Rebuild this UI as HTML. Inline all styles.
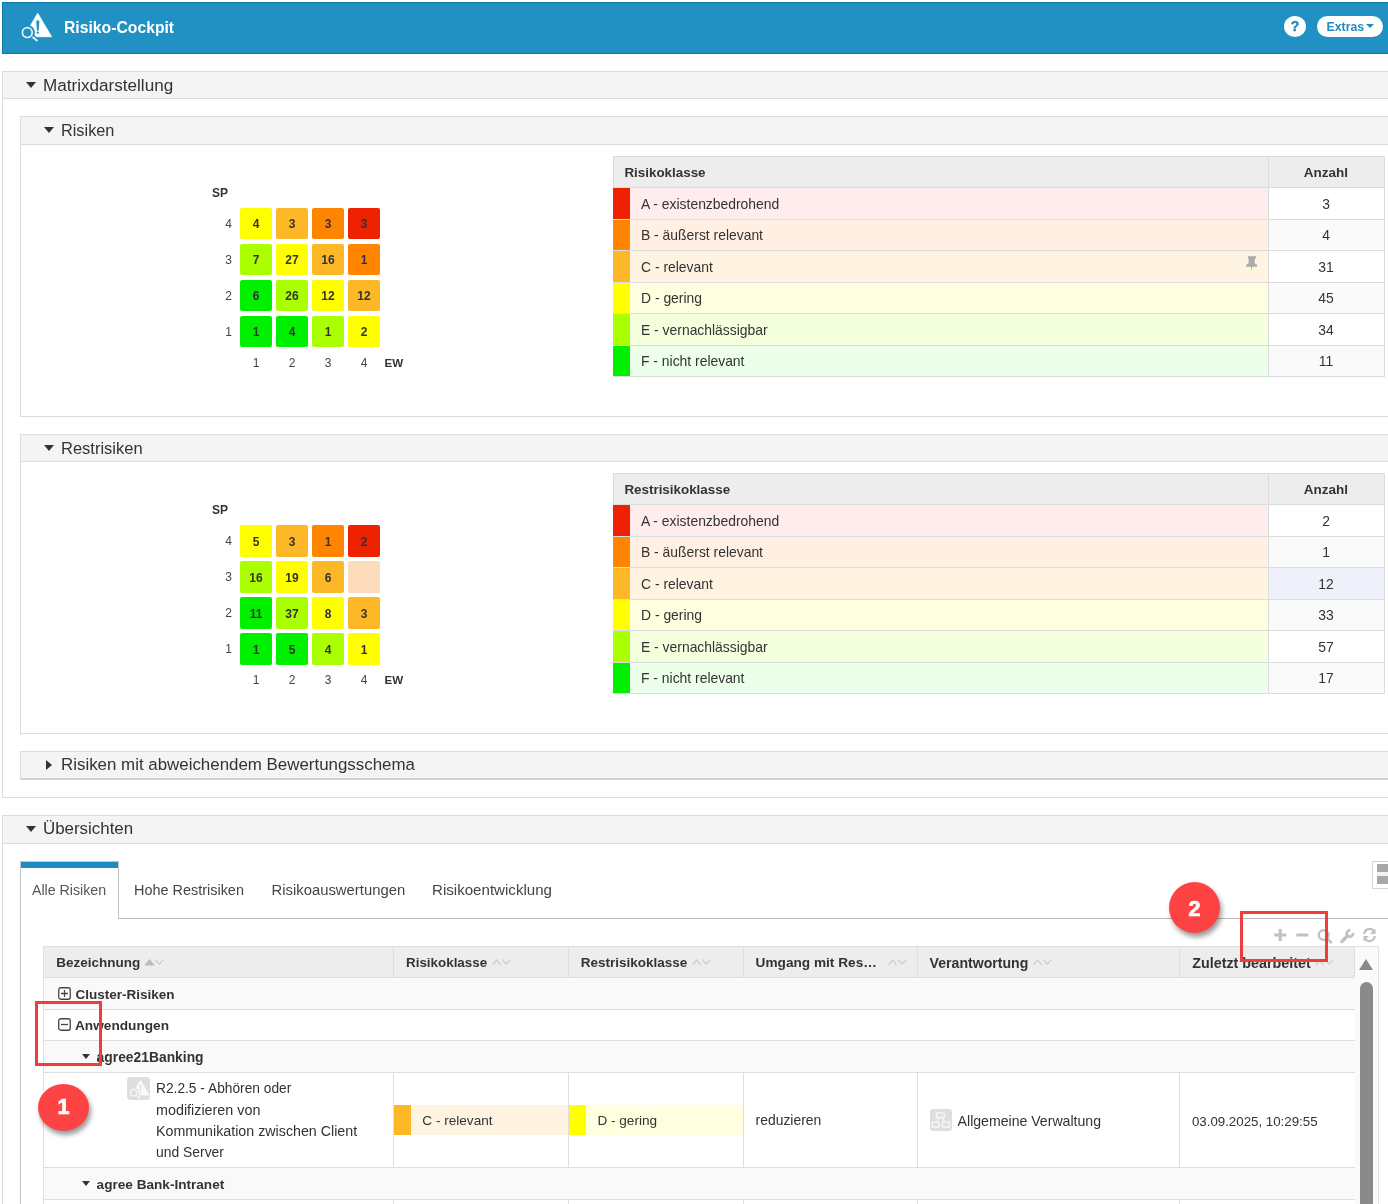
<!DOCTYPE html>
<html><head><meta charset="utf-8">
<style>
*{box-sizing:border-box;margin:0;padding:0}
html,body{width:1388px;height:1204px;overflow:hidden;background:#fff;font-family:"Liberation Sans",sans-serif;color:#333;position:relative}
.a{position:absolute}
.t{position:absolute;white-space:nowrap;line-height:1}
</style></head><body><div style="position:absolute;left:0;top:0;width:1388px;height:1204px;overflow:hidden;will-change:transform">
<div class="a" style="left:2px;top:2px;width:1400px;height:52px;background:#2191c3;border:1px solid #0d78ad"></div>
<svg class="a" style="left:16px;top:8px" width="44" height="38" viewBox="16 8 44 38">
<path d="M37.7,13.2 L51.6,36.7 L24,36.7 Z" fill="#fff" stroke="#fff" stroke-width="0.8" stroke-linejoin="round"/>
<path d="M36.2,21.2 Q37.8,19.5 39.4,21.2 L38.6,30.8 L37,30.8 Z" fill="#2191c3"/>
<circle cx="37.8" cy="32.6" r="1.2" fill="#2191c3"/>
<circle cx="27.3" cy="32.6" r="7.6" fill="#2191c3"/>
<path d="M31.5,36.5 L36.5,41.5 L38.5,39.5 L34,34.5 Z" fill="#2191c3"/>
<circle cx="27.3" cy="32.6" r="4.9" fill="none" stroke="#e6f2f8" stroke-width="1.7"/>
<line x1="33.2" y1="37.4" x2="36.9" y2="40.5" stroke="#e6f2f8" stroke-width="2" stroke-linecap="round"/>
</svg>
<div class="t" style="left:63.50px;top:18.91px;font-size:17px;font-weight:bold;color:#fff;transform:scaleX(0.925);transform-origin:0 0">Risiko-Cockpit</div>
<div class="a" style="left:1284px;top:16px;width:22px;height:21px;background:#fff;border-radius:50%"></div>
<div class="t" style="left:995.00px;width:600px;text-align:center;top:19.15px;font-size:14px;font-weight:bold;color:#1f8bc0;-webkit-text-stroke:0.4px #1f8bc0">?</div>
<div class="a" style="left:1317px;top:16px;width:66px;height:21px;background:#fff;border-radius:11px"></div>
<div class="t" style="left:1326.50px;top:21.09px;font-size:12.3px;font-weight:bold;color:#1f8bc0;">Extras</div>
<div class="a" style="left:1366px;top:24px;width:0;height:0;border-left:4px solid transparent;border-right:4px solid transparent;border-top:4.5px solid #1f8bc0"></div>
<div class="a" style="left:2px;top:71px;width:1400px;height:727px;background:#fff;border:1px solid #dcdcdc"></div>
<div class="a" style="left:2px;top:71px;width:1400px;height:28px;background:#f4f4f4;border:1px solid #dcdcdc"></div>
<div class="a" style="left:26px;top:82px;width:0;height:0;border-left:5px solid transparent;border-right:5px solid transparent;border-top:6px solid #333"></div>
<div class="t" style="left:43.00px;top:76.52px;font-size:17.1px;color:#333;">Matrixdarstellung</div>
<div class="a" style="left:20px;top:116px;width:1400px;height:301px;background:#fff;border:1px solid #dcdcdc"></div>
<div class="a" style="left:20px;top:116px;width:1400px;height:29px;background:#f4f4f4;border:1px solid #dcdcdc"></div>
<div class="a" style="left:44px;top:127px;width:0;height:0;border-left:5px solid transparent;border-right:5px solid transparent;border-top:6px solid #333"></div>
<div class="t" style="left:61.00px;top:122.00px;font-size:16.3px;color:#333;">Risiken</div>
<div class="a" style="left:20px;top:434px;width:1400px;height:300px;background:#fff;border:1px solid #dcdcdc"></div>
<div class="a" style="left:20px;top:434px;width:1400px;height:28px;background:#f4f4f4;border:1px solid #dcdcdc"></div>
<div class="a" style="left:44px;top:445px;width:0;height:0;border-left:5px solid transparent;border-right:5px solid transparent;border-top:6px solid #333"></div>
<div class="t" style="left:61.00px;top:440.03px;font-size:16.5px;color:#333;">Restrisiken</div>
<div class="a" style="left:20px;top:751px;width:1400px;height:29px;background:#f4f4f4;border:1px solid #dcdcdc;border-bottom:2px solid #d2d2d2"></div>
<div class="a" style="left:46px;top:759.5px;width:0;height:0;border-top:5.5px solid transparent;border-bottom:5.5px solid transparent;border-left:6.5px solid #333"></div>
<div class="t" style="left:61.00px;top:756.99px;font-size:16.9px;color:#333;">Risiken mit abweichendem Bewertungsschema</div>
<div class="a" style="left:2px;top:815px;width:1400px;height:600px;background:#fff;border:1px solid #dcdcdc"></div>
<div class="a" style="left:2px;top:815px;width:1400px;height:29px;background:#f4f4f4;border:1px solid #dcdcdc"></div>
<div class="a" style="left:26px;top:826px;width:0;height:0;border-left:5px solid transparent;border-right:5px solid transparent;border-top:6px solid #333"></div>
<div class="t" style="left:43.00px;top:821.49px;font-size:16.9px;color:#333;">Übersichten</div>
<div class="t" style="left:212.00px;top:186.74px;font-size:12px;font-weight:bold;color:#333;">SP</div>
<div class="t" style="left:-71.30px;width:600px;text-align:center;top:217.84px;font-size:12px;color:#444;">4</div>
<div class="a" style="left:240px;top:208px;width:32px;height:31px;background:#ffff00;border-radius:2px"></div>
<div class="t" style="left:-44.00px;width:600px;text-align:center;top:217.84px;font-size:12px;font-weight:bold;color:#333;">4</div>
<div class="a" style="left:276px;top:208px;width:32px;height:31px;background:#fdb827;border-radius:2px"></div>
<div class="t" style="left:-8.00px;width:600px;text-align:center;top:217.84px;font-size:12px;font-weight:bold;color:#333;">3</div>
<div class="a" style="left:312px;top:208px;width:32px;height:31px;background:#ff8500;border-radius:2px"></div>
<div class="t" style="left:28.00px;width:600px;text-align:center;top:217.84px;font-size:12px;font-weight:bold;color:#333;">3</div>
<div class="a" style="left:348px;top:208px;width:32px;height:31px;background:#ee2200;border-radius:2px"></div>
<div class="t" style="left:64.00px;width:600px;text-align:center;top:217.84px;font-size:12px;font-weight:bold;color:#333;">3</div>
<div class="t" style="left:-71.30px;width:600px;text-align:center;top:253.84px;font-size:12px;color:#444;">3</div>
<div class="a" style="left:240px;top:244px;width:32px;height:31px;background:#aaff00;border-radius:2px"></div>
<div class="t" style="left:-44.00px;width:600px;text-align:center;top:253.84px;font-size:12px;font-weight:bold;color:#333;">7</div>
<div class="a" style="left:276px;top:244px;width:32px;height:31px;background:#ffff00;border-radius:2px"></div>
<div class="t" style="left:-8.00px;width:600px;text-align:center;top:253.84px;font-size:12px;font-weight:bold;color:#333;">27</div>
<div class="a" style="left:312px;top:244px;width:32px;height:31px;background:#fdb827;border-radius:2px"></div>
<div class="t" style="left:28.00px;width:600px;text-align:center;top:253.84px;font-size:12px;font-weight:bold;color:#333;">16</div>
<div class="a" style="left:348px;top:244px;width:32px;height:31px;background:#ff8500;border-radius:2px"></div>
<div class="t" style="left:64.00px;width:600px;text-align:center;top:253.84px;font-size:12px;font-weight:bold;color:#333;">1</div>
<div class="t" style="left:-71.30px;width:600px;text-align:center;top:289.84px;font-size:12px;color:#444;">2</div>
<div class="a" style="left:240px;top:280px;width:32px;height:31px;background:#00f000;border-radius:2px"></div>
<div class="t" style="left:-44.00px;width:600px;text-align:center;top:289.84px;font-size:12px;font-weight:bold;color:#333;">6</div>
<div class="a" style="left:276px;top:280px;width:32px;height:31px;background:#aaff00;border-radius:2px"></div>
<div class="t" style="left:-8.00px;width:600px;text-align:center;top:289.84px;font-size:12px;font-weight:bold;color:#333;">26</div>
<div class="a" style="left:312px;top:280px;width:32px;height:31px;background:#ffff00;border-radius:2px"></div>
<div class="t" style="left:28.00px;width:600px;text-align:center;top:289.84px;font-size:12px;font-weight:bold;color:#333;">12</div>
<div class="a" style="left:348px;top:280px;width:32px;height:31px;background:#fdb827;border-radius:2px"></div>
<div class="t" style="left:64.00px;width:600px;text-align:center;top:289.84px;font-size:12px;font-weight:bold;color:#333;">12</div>
<div class="t" style="left:-71.30px;width:600px;text-align:center;top:325.84px;font-size:12px;color:#444;">1</div>
<div class="a" style="left:240px;top:316px;width:32px;height:31px;background:#00f000;border-radius:2px"></div>
<div class="t" style="left:-44.00px;width:600px;text-align:center;top:325.84px;font-size:12px;font-weight:bold;color:#333;">1</div>
<div class="a" style="left:276px;top:316px;width:32px;height:31px;background:#00f000;border-radius:2px"></div>
<div class="t" style="left:-8.00px;width:600px;text-align:center;top:325.84px;font-size:12px;font-weight:bold;color:#333;">4</div>
<div class="a" style="left:312px;top:316px;width:32px;height:31px;background:#aaff00;border-radius:2px"></div>
<div class="t" style="left:28.00px;width:600px;text-align:center;top:325.84px;font-size:12px;font-weight:bold;color:#333;">1</div>
<div class="a" style="left:348px;top:316px;width:32px;height:31px;background:#ffff00;border-radius:2px"></div>
<div class="t" style="left:64.00px;width:600px;text-align:center;top:325.84px;font-size:12px;font-weight:bold;color:#333;">2</div>
<div class="t" style="left:-44.00px;width:600px;text-align:center;top:356.64px;font-size:12px;color:#444;">1</div>
<div class="t" style="left:-8.00px;width:600px;text-align:center;top:356.64px;font-size:12px;color:#444;">2</div>
<div class="t" style="left:28.00px;width:600px;text-align:center;top:356.64px;font-size:12px;color:#444;">3</div>
<div class="t" style="left:64.00px;width:600px;text-align:center;top:356.64px;font-size:12px;color:#444;">4</div>
<div class="t" style="left:384.50px;top:356.98px;font-size:11.6px;font-weight:bold;color:#333;">EW</div>
<div class="t" style="left:212.00px;top:503.74px;font-size:12px;font-weight:bold;color:#333;">SP</div>
<div class="t" style="left:-71.30px;width:600px;text-align:center;top:534.84px;font-size:12px;color:#444;">4</div>
<div class="a" style="left:240px;top:525px;width:32px;height:32px;background:#ffff00;border-radius:2px"></div>
<div class="t" style="left:-44.00px;width:600px;text-align:center;top:535.84px;font-size:12px;font-weight:bold;color:#333;">5</div>
<div class="a" style="left:276px;top:525px;width:32px;height:32px;background:#fdb827;border-radius:2px"></div>
<div class="t" style="left:-8.00px;width:600px;text-align:center;top:535.84px;font-size:12px;font-weight:bold;color:#333;">3</div>
<div class="a" style="left:312px;top:525px;width:32px;height:32px;background:#ff8500;border-radius:2px"></div>
<div class="t" style="left:28.00px;width:600px;text-align:center;top:535.84px;font-size:12px;font-weight:bold;color:#333;">1</div>
<div class="a" style="left:348px;top:525px;width:32px;height:32px;background:#ee2200;border-radius:2px"></div>
<div class="t" style="left:64.00px;width:600px;text-align:center;top:535.84px;font-size:12px;font-weight:bold;color:#333;">2</div>
<div class="t" style="left:-71.30px;width:600px;text-align:center;top:570.84px;font-size:12px;color:#444;">3</div>
<div class="a" style="left:240px;top:561px;width:32px;height:32px;background:#aaff00;border-radius:2px"></div>
<div class="t" style="left:-44.00px;width:600px;text-align:center;top:571.84px;font-size:12px;font-weight:bold;color:#333;">16</div>
<div class="a" style="left:276px;top:561px;width:32px;height:32px;background:#ffff00;border-radius:2px"></div>
<div class="t" style="left:-8.00px;width:600px;text-align:center;top:571.84px;font-size:12px;font-weight:bold;color:#333;">19</div>
<div class="a" style="left:312px;top:561px;width:32px;height:32px;background:#fdb827;border-radius:2px"></div>
<div class="t" style="left:28.00px;width:600px;text-align:center;top:571.84px;font-size:12px;font-weight:bold;color:#333;">6</div>
<div class="a" style="left:348px;top:561px;width:32px;height:32px;background:#fddcbc;border-radius:2px"></div>
<div class="t" style="left:-71.30px;width:600px;text-align:center;top:606.84px;font-size:12px;color:#444;">2</div>
<div class="a" style="left:240px;top:597px;width:32px;height:32px;background:#00f000;border-radius:2px"></div>
<div class="t" style="left:-44.00px;width:600px;text-align:center;top:607.84px;font-size:12px;font-weight:bold;color:#333;">11</div>
<div class="a" style="left:276px;top:597px;width:32px;height:32px;background:#aaff00;border-radius:2px"></div>
<div class="t" style="left:-8.00px;width:600px;text-align:center;top:607.84px;font-size:12px;font-weight:bold;color:#333;">37</div>
<div class="a" style="left:312px;top:597px;width:32px;height:32px;background:#ffff00;border-radius:2px"></div>
<div class="t" style="left:28.00px;width:600px;text-align:center;top:607.84px;font-size:12px;font-weight:bold;color:#333;">8</div>
<div class="a" style="left:348px;top:597px;width:32px;height:32px;background:#fdb827;border-radius:2px"></div>
<div class="t" style="left:64.00px;width:600px;text-align:center;top:607.84px;font-size:12px;font-weight:bold;color:#333;">3</div>
<div class="t" style="left:-71.30px;width:600px;text-align:center;top:642.84px;font-size:12px;color:#444;">1</div>
<div class="a" style="left:240px;top:633px;width:32px;height:32px;background:#00f000;border-radius:2px"></div>
<div class="t" style="left:-44.00px;width:600px;text-align:center;top:643.84px;font-size:12px;font-weight:bold;color:#333;">1</div>
<div class="a" style="left:276px;top:633px;width:32px;height:32px;background:#00f000;border-radius:2px"></div>
<div class="t" style="left:-8.00px;width:600px;text-align:center;top:643.84px;font-size:12px;font-weight:bold;color:#333;">5</div>
<div class="a" style="left:312px;top:633px;width:32px;height:32px;background:#aaff00;border-radius:2px"></div>
<div class="t" style="left:28.00px;width:600px;text-align:center;top:643.84px;font-size:12px;font-weight:bold;color:#333;">4</div>
<div class="a" style="left:348px;top:633px;width:32px;height:32px;background:#ffff00;border-radius:2px"></div>
<div class="t" style="left:64.00px;width:600px;text-align:center;top:643.84px;font-size:12px;font-weight:bold;color:#333;">1</div>
<div class="t" style="left:-44.00px;width:600px;text-align:center;top:673.64px;font-size:12px;color:#444;">1</div>
<div class="t" style="left:-8.00px;width:600px;text-align:center;top:673.64px;font-size:12px;color:#444;">2</div>
<div class="t" style="left:28.00px;width:600px;text-align:center;top:673.64px;font-size:12px;color:#444;">3</div>
<div class="t" style="left:64.00px;width:600px;text-align:center;top:673.64px;font-size:12px;color:#444;">4</div>
<div class="t" style="left:384.50px;top:673.98px;font-size:11.6px;font-weight:bold;color:#333;">EW</div>
<div class="a" style="left:613px;top:156px;width:772px;height:31px;background:#ededed"></div>
<div class="t" style="left:624.40px;top:165.65px;font-size:13.4px;font-weight:bold;color:#333;">Risikoklasse</div>
<div class="t" style="left:1026.00px;width:600px;text-align:center;top:165.57px;font-size:13.5px;font-weight:bold;color:#333;">Anzahl</div>
<div class="a" style="left:613px;top:187px;width:655px;height:32px;background:#ffeded"></div>
<div class="a" style="left:1269px;top:187px;width:116px;height:32px;background:#ffffff"></div>
<div class="a" style="left:613px;top:187px;width:17px;height:32px;background:#ee2200"></div>
<div class="t" style="left:641.00px;top:197.63px;font-size:13.9px;color:#333;">A - existenzbedrohend</div>
<div class="t" style="left:1026.00px;width:600px;text-align:center;top:197.63px;font-size:13.9px;color:#333;">3</div>
<div class="a" style="left:613px;top:219px;width:655px;height:31px;background:#fff0e3"></div>
<div class="a" style="left:1269px;top:219px;width:116px;height:31px;background:#fafafa"></div>
<div class="a" style="left:613px;top:219px;width:17px;height:31px;background:#ff8500"></div>
<div class="t" style="left:641.00px;top:229.13px;font-size:13.9px;color:#333;">B - äußerst relevant</div>
<div class="t" style="left:1026.00px;width:600px;text-align:center;top:229.13px;font-size:13.9px;color:#333;">4</div>
<div class="a" style="left:613px;top:250px;width:655px;height:32px;background:#fff4e2"></div>
<div class="a" style="left:1269px;top:250px;width:116px;height:32px;background:#ffffff"></div>
<div class="a" style="left:613px;top:250px;width:17px;height:32px;background:#fdb827"></div>
<div class="t" style="left:641.00px;top:260.63px;font-size:13.9px;color:#333;">C - relevant</div>
<div class="t" style="left:1026.00px;width:600px;text-align:center;top:260.63px;font-size:13.9px;color:#333;">31</div>
<div class="a" style="left:613px;top:282px;width:655px;height:31px;background:#ffffdf"></div>
<div class="a" style="left:1269px;top:282px;width:116px;height:31px;background:#fafafa"></div>
<div class="a" style="left:613px;top:282px;width:17px;height:31px;background:#ffff00"></div>
<div class="t" style="left:641.00px;top:292.13px;font-size:13.9px;color:#333;">D - gering</div>
<div class="t" style="left:1026.00px;width:600px;text-align:center;top:292.13px;font-size:13.9px;color:#333;">45</div>
<div class="a" style="left:613px;top:313px;width:655px;height:32px;background:#f4ffdd"></div>
<div class="a" style="left:1269px;top:313px;width:116px;height:32px;background:#ffffff"></div>
<div class="a" style="left:613px;top:313px;width:17px;height:32px;background:#aaff00"></div>
<div class="t" style="left:641.00px;top:323.63px;font-size:13.9px;color:#333;">E - vernachlässigbar</div>
<div class="t" style="left:1026.00px;width:600px;text-align:center;top:323.63px;font-size:13.9px;color:#333;">34</div>
<div class="a" style="left:613px;top:345px;width:655px;height:31px;background:#ebffea"></div>
<div class="a" style="left:1269px;top:345px;width:116px;height:31px;background:#fafafa"></div>
<div class="a" style="left:613px;top:345px;width:17px;height:31px;background:#00f000"></div>
<div class="t" style="left:641.00px;top:355.13px;font-size:13.9px;color:#333;">F - nicht relevant</div>
<div class="t" style="left:1026.00px;width:600px;text-align:center;top:355.13px;font-size:13.9px;color:#333;">11</div>
<div class="a" style="left:613px;top:156px;width:772px;height:1px;background:#dcdcdc"></div>
<div class="a" style="left:613px;top:187px;width:772px;height:1px;background:#dcdcdc"></div>
<div class="a" style="left:613px;top:219px;width:772px;height:1px;background:#dcdcdc"></div>
<div class="a" style="left:613px;top:250px;width:772px;height:1px;background:#dcdcdc"></div>
<div class="a" style="left:613px;top:282px;width:772px;height:1px;background:#dcdcdc"></div>
<div class="a" style="left:613px;top:313px;width:772px;height:1px;background:#dcdcdc"></div>
<div class="a" style="left:613px;top:345px;width:772px;height:1px;background:#dcdcdc"></div>
<div class="a" style="left:613px;top:376px;width:772px;height:1px;background:#dcdcdc"></div>
<div class="a" style="left:1268px;top:156px;width:1px;height:220px;background:#dcdcdc"></div>
<div class="a" style="left:1384px;top:156px;width:1px;height:221px;background:#dcdcdc"></div>
<div class="a" style="left:613px;top:156px;width:1px;height:32px;background:#dcdcdc"></div>
<div class="a" style="left:613px;top:473px;width:772px;height:31px;background:#ededed"></div>
<div class="t" style="left:624.40px;top:482.65px;font-size:13.4px;font-weight:bold;color:#333;">Restrisikoklasse</div>
<div class="t" style="left:1026.00px;width:600px;text-align:center;top:482.57px;font-size:13.5px;font-weight:bold;color:#333;">Anzahl</div>
<div class="a" style="left:613px;top:504px;width:655px;height:32px;background:#ffeded"></div>
<div class="a" style="left:1269px;top:504px;width:116px;height:32px;background:#ffffff"></div>
<div class="a" style="left:613px;top:504px;width:17px;height:32px;background:#ee2200"></div>
<div class="t" style="left:641.00px;top:514.63px;font-size:13.9px;color:#333;">A - existenzbedrohend</div>
<div class="t" style="left:1026.00px;width:600px;text-align:center;top:514.63px;font-size:13.9px;color:#333;">2</div>
<div class="a" style="left:613px;top:536px;width:655px;height:31px;background:#fff0e3"></div>
<div class="a" style="left:1269px;top:536px;width:116px;height:31px;background:#fafafa"></div>
<div class="a" style="left:613px;top:536px;width:17px;height:31px;background:#ff8500"></div>
<div class="t" style="left:641.00px;top:546.13px;font-size:13.9px;color:#333;">B - äußerst relevant</div>
<div class="t" style="left:1026.00px;width:600px;text-align:center;top:546.13px;font-size:13.9px;color:#333;">1</div>
<div class="a" style="left:613px;top:567px;width:655px;height:32px;background:#fff4e2"></div>
<div class="a" style="left:1269px;top:567px;width:116px;height:32px;background:#eef0fa"></div>
<div class="a" style="left:613px;top:567px;width:17px;height:32px;background:#fdb827"></div>
<div class="t" style="left:641.00px;top:577.63px;font-size:13.9px;color:#333;">C - relevant</div>
<div class="t" style="left:1026.00px;width:600px;text-align:center;top:577.63px;font-size:13.9px;color:#333;">12</div>
<div class="a" style="left:613px;top:599px;width:655px;height:31px;background:#ffffdf"></div>
<div class="a" style="left:1269px;top:599px;width:116px;height:31px;background:#fafafa"></div>
<div class="a" style="left:613px;top:599px;width:17px;height:31px;background:#ffff00"></div>
<div class="t" style="left:641.00px;top:609.13px;font-size:13.9px;color:#333;">D - gering</div>
<div class="t" style="left:1026.00px;width:600px;text-align:center;top:609.13px;font-size:13.9px;color:#333;">33</div>
<div class="a" style="left:613px;top:630px;width:655px;height:32px;background:#f4ffdd"></div>
<div class="a" style="left:1269px;top:630px;width:116px;height:32px;background:#ffffff"></div>
<div class="a" style="left:613px;top:630px;width:17px;height:32px;background:#aaff00"></div>
<div class="t" style="left:641.00px;top:640.63px;font-size:13.9px;color:#333;">E - vernachlässigbar</div>
<div class="t" style="left:1026.00px;width:600px;text-align:center;top:640.63px;font-size:13.9px;color:#333;">57</div>
<div class="a" style="left:613px;top:662px;width:655px;height:31px;background:#ebffea"></div>
<div class="a" style="left:1269px;top:662px;width:116px;height:31px;background:#fafafa"></div>
<div class="a" style="left:613px;top:662px;width:17px;height:31px;background:#00f000"></div>
<div class="t" style="left:641.00px;top:672.13px;font-size:13.9px;color:#333;">F - nicht relevant</div>
<div class="t" style="left:1026.00px;width:600px;text-align:center;top:672.13px;font-size:13.9px;color:#333;">17</div>
<div class="a" style="left:613px;top:473px;width:772px;height:1px;background:#dcdcdc"></div>
<div class="a" style="left:613px;top:504px;width:772px;height:1px;background:#dcdcdc"></div>
<div class="a" style="left:613px;top:536px;width:772px;height:1px;background:#dcdcdc"></div>
<div class="a" style="left:613px;top:567px;width:772px;height:1px;background:#dcdcdc"></div>
<div class="a" style="left:613px;top:599px;width:772px;height:1px;background:#dcdcdc"></div>
<div class="a" style="left:613px;top:630px;width:772px;height:1px;background:#dcdcdc"></div>
<div class="a" style="left:613px;top:662px;width:772px;height:1px;background:#dcdcdc"></div>
<div class="a" style="left:613px;top:693px;width:772px;height:1px;background:#dcdcdc"></div>
<div class="a" style="left:1268px;top:473px;width:1px;height:220px;background:#dcdcdc"></div>
<div class="a" style="left:1384px;top:473px;width:1px;height:221px;background:#dcdcdc"></div>
<div class="a" style="left:613px;top:473px;width:1px;height:32px;background:#dcdcdc"></div>
<svg class="a" style="left:1244px;top:254px" width="16" height="20" viewBox="1244 254 16 20">
<path d="M1248,256.2 H1256 V258.6 H1254.8 V263.4 L1257,264.8 V266.8 H1252.3 L1251.6,271.2 L1250.9,266.8 H1246.2 V264.8 L1248.6,263.4 V258.6 H1248 Z" fill="#aaa"/>
</svg>
<div class="a" style="left:20px;top:918px;width:1400px;height:1px;background:#b8b8b8"></div>
<div class="a" style="left:20px;top:861px;width:99px;height:58px;background:#fff;border:1px solid #c4c4c4;border-bottom:none"></div>
<div class="a" style="left:21px;top:862px;width:97px;height:6px;background:#1f8bc0"></div>
<div class="a" style="left:20px;top:918px;width:1px;height:400px;background:#c4c4c4"></div>
<div class="t" style="left:32.00px;top:882.98px;font-size:14.2px;color:#555;">Alle Risiken</div>
<div class="t" style="left:134.00px;top:882.77px;font-size:14.45px;color:#444;">Hohe Restrisiken</div>
<div class="t" style="left:271.50px;top:883.03px;font-size:14.85px;color:#444;">Risikoauswertungen</div>
<div class="t" style="left:432.00px;top:882.21px;font-size:15.1px;color:#444;">Risikoentwicklung</div>
<div class="a" style="left:1372px;top:861px;width:30px;height:28px;background:#fff;border:1px solid #d4d4d4"></div>
<div class="a" style="left:1377px;top:864px;width:30px;height:20px;background:#f2f2f2"></div>
<div class="a" style="left:1377px;top:864px;width:30px;height:8.3px;background:#a8a8a8"></div>
<div class="a" style="left:1377px;top:875.7px;width:30px;height:8.1px;background:#a8a8a8"></div>
<svg class="a" style="left:1268px;top:924px" width="114" height="24" viewBox="1268 924 114 24">
<path d="M1280.2,929 V941 M1274.2,935 H1286.2" stroke="#c0c0c0" stroke-width="3"/>
<path d="M1296.3,935 H1308.3" stroke="#c0c0c0" stroke-width="3"/>
<circle cx="1323.7" cy="935" r="4.9" fill="none" stroke="#c0c0c0" stroke-width="2.3"/>
<path d="M1327.3,938.6 L1331,942.3" stroke="#c0c0c0" stroke-width="2.6" stroke-linecap="round"/>
<path d="M1352.95,932.94 A3.2,3.2 0 1 1 1350.36,930.35" fill="none" stroke="#c0c0c0" stroke-width="2.6"/>
<path d="M1347.6,935.8 L1341.9,941.5" stroke="#c0c0c0" stroke-width="3.4" stroke-linecap="round"/>
<circle cx="1342.3" cy="941.1" r="0.6" fill="#fff"/>
<path d="M1364.2,934 A5.5,5.5 0 0 1 1374.2,931.3" fill="none" stroke="#c0c0c0" stroke-width="2.2"/>
<path d="M1375.5,928.5 V934 H1370 Z" fill="#c0c0c0"/>
<path d="M1374.8,936 A5.5,5.5 0 0 1 1364.8,938.7" fill="none" stroke="#c0c0c0" stroke-width="2.2"/>
<path d="M1363.5,941.5 V936 H1369 Z" fill="#c0c0c0"/>
</svg>
<div class="a" style="left:43px;top:946px;width:1312px;height:32px;background:#ededed;border:1px solid #dedede"></div>
<div class="a" style="left:393px;top:947px;width:1px;height:30px;background:#dedede"></div>
<div class="a" style="left:568px;top:947px;width:1px;height:30px;background:#dedede"></div>
<div class="a" style="left:743px;top:947px;width:1px;height:30px;background:#dedede"></div>
<div class="a" style="left:917px;top:947px;width:1px;height:30px;background:#dedede"></div>
<div class="a" style="left:1179px;top:947px;width:1px;height:30px;background:#dedede"></div>
<svg width="0" height="0" style="position:absolute"><defs></defs></svg>
<div class="t" style="left:56.20px;top:956.37px;font-size:13.5px;font-weight:bold;color:#333;">Bezeichnung</div>
<svg class="a" style="left:144.5px;top:957px" width="20" height="12" viewBox="0 0 20 12"><path d="M0.6,7.8 L4.6,3 L8.6,7.8 Z" fill="#bbbbbb" stroke="#bbbbbb" stroke-width="1.3"/><path d="M10.1,2.6 L14.2,7 L18.3,2.6" fill="none" stroke="#cdcdcd" stroke-width="1.3"/></svg>
<div class="t" style="left:406.00px;top:956.45px;font-size:13.4px;font-weight:bold;color:#333;">Risikoklasse</div>
<svg class="a" style="left:491.5px;top:957px" width="20" height="12" viewBox="0 0 20 12"><path d="M0.6,7.8 L4.6,3 L8.6,7.8" fill="none" stroke="#cdcdcd" stroke-width="1.3"/><path d="M10.1,2.6 L14.2,7 L18.3,2.6" fill="none" stroke="#cdcdcd" stroke-width="1.3"/></svg>
<div class="t" style="left:580.70px;top:956.37px;font-size:13.5px;font-weight:bold;color:#333;">Restrisikoklasse</div>
<svg class="a" style="left:691.6px;top:957px" width="20" height="12" viewBox="0 0 20 12"><path d="M0.6,7.8 L4.6,3 L8.6,7.8" fill="none" stroke="#cdcdcd" stroke-width="1.3"/><path d="M10.1,2.6 L14.2,7 L18.3,2.6" fill="none" stroke="#cdcdcd" stroke-width="1.3"/></svg>
<div class="t" style="left:755.60px;top:956.24px;font-size:13.65px;font-weight:bold;color:#333;">Umgang mit Res…</div>
<svg class="a" style="left:888.0px;top:957px" width="20" height="12" viewBox="0 0 20 12"><path d="M0.6,7.8 L4.6,3 L8.6,7.8" fill="none" stroke="#cdcdcd" stroke-width="1.3"/><path d="M10.1,2.6 L14.2,7 L18.3,2.6" fill="none" stroke="#cdcdcd" stroke-width="1.3"/></svg>
<div class="t" style="left:929.60px;top:955.86px;font-size:14.1px;font-weight:bold;color:#333;">Verantwortung</div>
<svg class="a" style="left:1032.6px;top:957px" width="20" height="12" viewBox="0 0 20 12"><path d="M0.6,7.8 L4.6,3 L8.6,7.8" fill="none" stroke="#cdcdcd" stroke-width="1.3"/><path d="M10.1,2.6 L14.2,7 L18.3,2.6" fill="none" stroke="#cdcdcd" stroke-width="1.3"/></svg>
<div class="t" style="left:1192.30px;top:955.69px;font-size:14.3px;font-weight:bold;color:#333;">Zuletzt bearbeitet</div>
<svg class="a" style="left:1315.0px;top:957px" width="20" height="12" viewBox="0 0 20 12"><path d="M0.6,7.8 L4.6,3 L8.6,7.8" fill="none" stroke="#cdcdcd" stroke-width="1.3"/><path d="M10.1,2.6 L14.2,7 L18.3,2.6" fill="none" stroke="#cdcdcd" stroke-width="1.3"/></svg>
<div class="a" style="left:44px;top:978px;width:1311px;height:31px;background:#f9f9f9"></div>
<div class="a" style="left:44px;top:1009px;width:1311px;height:1px;background:#dedede"></div>
<div class="a" style="left:44px;top:1010px;width:1311px;height:30px;background:#ffffff"></div>
<div class="a" style="left:44px;top:1040px;width:1311px;height:1px;background:#dedede"></div>
<div class="a" style="left:44px;top:1041px;width:1311px;height:31px;background:#f9f9f9"></div>
<div class="a" style="left:44px;top:1072px;width:1311px;height:1px;background:#dedede"></div>
<div class="a" style="left:44px;top:1073px;width:1311px;height:94px;background:#ffffff"></div>
<div class="a" style="left:44px;top:1167px;width:1311px;height:1px;background:#dedede"></div>
<div class="a" style="left:44px;top:1168px;width:1311px;height:31px;background:#f9f9f9"></div>
<div class="a" style="left:44px;top:1199px;width:1311px;height:1px;background:#dedede"></div>
<div class="a" style="left:44px;top:1200px;width:1311px;height:60px;background:#ffffff"></div>
<div class="a" style="left:44px;top:1260px;width:1311px;height:1px;background:#dedede"></div>
<div class="a" style="left:43px;top:977px;width:1px;height:400px;background:#dedede"></div>
<div class="a" style="left:393px;top:1073px;width:1px;height:94px;background:#dedede"></div>
<div class="a" style="left:393px;top:1200px;width:1px;height:60px;background:#dedede"></div>
<div class="a" style="left:568px;top:1073px;width:1px;height:94px;background:#dedede"></div>
<div class="a" style="left:568px;top:1200px;width:1px;height:60px;background:#dedede"></div>
<div class="a" style="left:743px;top:1073px;width:1px;height:94px;background:#dedede"></div>
<div class="a" style="left:743px;top:1200px;width:1px;height:60px;background:#dedede"></div>
<div class="a" style="left:917px;top:1073px;width:1px;height:94px;background:#dedede"></div>
<div class="a" style="left:917px;top:1200px;width:1px;height:60px;background:#dedede"></div>
<div class="a" style="left:1179px;top:1073px;width:1px;height:94px;background:#dedede"></div>
<div class="a" style="left:1179px;top:1200px;width:1px;height:60px;background:#dedede"></div>
<svg class="a" style="left:58px;top:987px" width="13" height="13" viewBox="0 0 13 13"><rect x="0.75" y="0.75" width="11.5" height="11.5" rx="2" fill="#fff" stroke="#444" stroke-width="1.3"/><path d="M3,6.5 H10 M6.5,3 V10" stroke="#444" stroke-width="1.3"/></svg>
<div class="t" style="left:75.50px;top:987.57px;font-size:13.5px;font-weight:bold;color:#333;">Cluster-Risiken</div>
<svg class="a" style="left:58px;top:1018px" width="13" height="13" viewBox="0 0 13 13"><rect x="0.75" y="0.75" width="11.5" height="11.5" rx="2" fill="#fff" stroke="#444" stroke-width="1.3"/><path d="M3,6.5 H10" stroke="#444" stroke-width="1.3"/></svg>
<div class="t" style="left:75.00px;top:1018.64px;font-size:13.65px;font-weight:bold;color:#333;">Anwendungen</div>
<div class="a" style="left:81.7px;top:1054.3px;width:0;height:0;border-left:4.3px solid transparent;border-right:4.3px solid transparent;border-top:5.2px solid #333"></div>
<div class="t" style="left:96.60px;top:1051.07px;font-size:13.85px;font-weight:bold;color:#333;">agree21Banking</div>
<div class="a" style="left:81.7px;top:1181px;width:0;height:0;border-left:4.3px solid transparent;border-right:4.3px solid transparent;border-top:5.4px solid #333"></div>
<div class="t" style="left:96.60px;top:1177.98px;font-size:13.6px;font-weight:bold;color:#333;">agree Bank-Intranet</div>
<div class="a" style="left:127px;top:1077px;width:23px;height:23px;background:#dedede;border-radius:3.5px"></div>
<svg class="a" style="left:127px;top:1077px" width="23" height="23" viewBox="0 0 23 23">
<g transform="translate(-10.3,-5.0) scale(0.63)">
<path d="M37.7,13.2 L51.6,36.7 L24,36.7 Z" fill="#fafafa" stroke="#fafafa" stroke-width="1" stroke-linejoin="round"/>
<path d="M36.2,20.8 Q37.8,19.4 39.4,20.8 L38.6,30.6 L37,30.6 Z" fill="#dedede"/>
<circle cx="37.8" cy="33" r="1.3" fill="#dedede"/>
<circle cx="26.8" cy="32.8" r="8.4" fill="#dedede"/>
<path d="M31.5,36.5 L36.5,41.5 L38.5,39.5 L34,34.5 Z" fill="#dedede"/>
<circle cx="26.8" cy="32.8" r="5.4" fill="none" stroke="#f4f4f4" stroke-width="2.4"/>
<line x1="33" y1="37.6" x2="37" y2="41" stroke="#f4f4f4" stroke-width="2.8" stroke-linecap="round"/>
</g>
</svg>
<div class="t" style="left:156.00px;top:1081.96px;font-size:13.75px;color:#333;">R2.2.5 - Abhören oder</div>
<div class="t" style="left:156.00px;top:1102.85px;font-size:14.35px;color:#333;">modifizieren von</div>
<div class="t" style="left:156.00px;top:1124.13px;font-size:14.25px;color:#333;">Kommunikation zwischen Client</div>
<div class="t" style="left:156.00px;top:1145.63px;font-size:13.9px;color:#333;">und Server</div>
<div class="a" style="left:394px;top:1105px;width:174px;height:30px;background:#fff4e2"></div>
<div class="a" style="left:394px;top:1105px;width:17px;height:30px;background:#fdb827"></div>
<div class="t" style="left:422.30px;top:1114.48px;font-size:13.6px;color:#333;">C - relevant</div>
<div class="a" style="left:569px;top:1105px;width:174px;height:30px;background:#ffffdf"></div>
<div class="a" style="left:569px;top:1105px;width:17px;height:30px;background:#ffff00"></div>
<div class="t" style="left:597.40px;top:1114.48px;font-size:13.6px;color:#333;">D - gering</div>
<div class="t" style="left:755.60px;top:1114.03px;font-size:13.9px;color:#333;">reduzieren</div>
<div class="a" style="left:930px;top:1109px;width:22px;height:22px;background:#dedede;border-radius:3px"></div>
<svg class="a" style="left:930px;top:1109px" width="22" height="22" viewBox="0 0 22 22">
<rect x="6.5" y="4" width="8" height="4.6" rx="0.8" fill="none" stroke="#f4f4f4" stroke-width="1.6"/>
<rect x="2.1" y="13.3" width="7" height="4.8" rx="0.8" fill="none" stroke="#f4f4f4" stroke-width="1.6"/>
<rect x="12.3" y="13.3" width="7.3" height="4.8" rx="0.8" fill="none" stroke="#f4f4f4" stroke-width="1.6"/>
<path d="M9.6,8.6 L6.6,12.6 M11.6,8.6 L14.8,12.6" fill="none" stroke="#f4f4f4" stroke-width="1.5"/>
</svg>
<div class="t" style="left:957.60px;top:1113.86px;font-size:14.1px;color:#333;">Allgemeine Verwaltung</div>
<div class="t" style="left:1191.90px;top:1114.54px;font-size:13.3px;color:#333;">03.09.2025, 10:29:55</div>
<div class="a" style="left:1355px;top:946px;width:24px;height:300px;background:#fafafa;border:1px solid #e2e2e2;border-left:none"></div>
<div class="a" style="left:1359px;top:959px;width:0;height:0;border-left:7.5px solid transparent;border-right:7.5px solid transparent;border-bottom:11px solid #8a8a8a"></div>
<div class="a" style="left:1360px;top:982px;width:13px;height:300px;background:#8a8a8a;border-radius:6.5px"></div>
<div class="a" style="left:35px;top:1001px;width:67px;height:65px;border:3px solid #f23b3b"></div>
<div class="a" style="left:1240px;top:911px;width:88px;height:51px;border:3px solid #f23b3b"></div>
<div class="a" style="left:38px;top:1084px;width:51px;height:47px;border-radius:50%;background:#fd4343;box-shadow:2px 4px 5px rgba(0,0,0,0.4)"></div>
<div class="t" style="left:-236.50px;width:600px;text-align:center;top:1096.90px;font-size:21.5px;font-weight:bold;color:#fff;-webkit-text-stroke:0.7px #fff">1</div>
<div class="a" style="left:1169px;top:882px;width:51px;height:51px;border-radius:50%;background:#fd4343;box-shadow:2px 4px 5px rgba(0,0,0,0.4)"></div>
<div class="t" style="left:894.50px;width:600px;text-align:center;top:898.90px;font-size:21.5px;font-weight:bold;color:#fff;-webkit-text-stroke:0.7px #fff">2</div>
</div></body></html>
